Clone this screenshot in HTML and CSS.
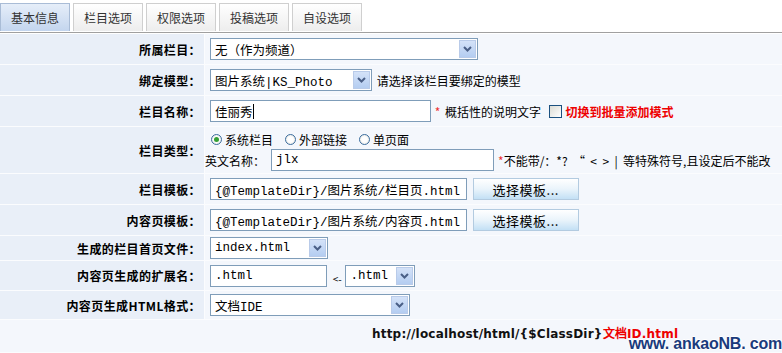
FILE: index.html
```html
<!DOCTYPE html>
<html lang="zh-CN">
<head>
  <meta charset="UTF-8">
  <title>栏目设置</title>
  <link rel="stylesheet" href="styles.css">
</head>
<body>
  <div class="tabs">
    <span class="tab active">基本信息</span>
    <span class="tab">栏目选项</span>
    <span class="tab">权限选项</span>
    <span class="tab">投稿选项</span>
    <span class="tab">自设选项</span>
  </div>

  <table class="form">
    <tr class="row">
      <td class="label">所属栏目：</td>
      <td class="field">
        <div class="select w268"><span class="select-text">无（作为频道）</span><span class="select-btn"><svg width="9" height="6" viewBox="0 0 9 6"><path d="M1 1l3.5 3.5L8 1" stroke="#4a5f86" stroke-width="2" fill="none"/></svg></span></div>
      </td>
    </tr>
    <tr class="row">
      <td class="label">绑定模型：</td>
      <td class="field">
        <div class="select w162"><span class="select-text">图片系统|KS_Photo</span><span class="select-btn"><svg width="9" height="6" viewBox="0 0 9 6"><path d="M1 1l3.5 3.5L8 1" stroke="#4a5f86" stroke-width="2" fill="none"/></svg></span></div>
        <span class="note">请选择该栏目要绑定的模型</span>
      </td>
    </tr>
    <tr class="row">
      <td class="label">栏目名称：</td>
      <td class="field">
        <div class="input w221">佳丽秀<span class="caret"></span></div>
        <span class="req">*</span> <span class="note">概括性的说明文字</span>
        <span class="checkbox"></span>
        <span class="warn">切换到批量添加模式</span>
      </td>
    </tr>
    <tr class="row tall">
      <td class="label">栏目类型：</td>
      <td class="field stack">
        <div class="radios">
          <span class="radio on"></span>系统栏目
          <span class="radio"></span>外部链接
          <span class="radio"></span>单页面
        </div>
        <div class="ename">
          英文名称：
          <div class="input w223">jlx</div>
          <span class="rule"><span class="req">*</span>不能带/：*?&nbsp;&nbsp;“&nbsp;&nbsp;&lt;&nbsp;&nbsp;&gt;&nbsp;&nbsp;|&nbsp;&nbsp;等特殊符号,且设定后不能改</span>
        </div>
      </td>
    </tr>
    <tr class="row">
      <td class="label">栏目模板：</td>
      <td class="field">
        <div class="input w257">{@TemplateDir}/图片系统/栏目页.html</div>
        <span class="btn">选择模板...</span>
      </td>
    </tr>
    <tr class="row">
      <td class="label">内容页模板：</td>
      <td class="field">
        <div class="input w257">{@TemplateDir}/图片系统/内容页.html</div>
        <span class="btn">选择模板...</span>
      </td>
    </tr>
    <tr class="row short">
      <td class="label">生成的栏目首页文件：</td>
      <td class="field">
        <div class="select w118"><span class="select-text">index.html</span><span class="select-btn"><svg width="9" height="6" viewBox="0 0 9 6"><path d="M1 1l3.5 3.5L8 1" stroke="#4a5f86" stroke-width="2" fill="none"/></svg></span></div>
      </td>
    </tr>
    <tr class="row mid">
      <td class="label">内容页生成的扩展名：</td>
      <td class="field">
        <div class="input w117">.html</div>
        <span class="arrow">&lt;-</span>
        <div class="select w70"><span class="select-text">.html</span><span class="select-btn"><svg width="9" height="6" viewBox="0 0 9 6"><path d="M1 1l3.5 3.5L8 1" stroke="#4a5f86" stroke-width="2" fill="none"/></svg></span></div>
      </td>
    </tr>
    <tr class="row mid2">
      <td class="label">内容页生成HTML格式：</td>
      <td class="field">
        <div class="select w200"><span class="select-text">文档IDE</span><span class="select-btn"><svg width="9" height="6" viewBox="0 0 9 6"><path d="M1 1l3.5 3.5L8 1" stroke="#4a5f86" stroke-width="2" fill="none"/></svg></span></div>
      </td>
    </tr>
    <tr class="row last">
      <td class="url" colspan="2">http://localhost/html/{$ClassDir}<span class="red">文档ID.html</span></td>
    </tr>
  </table>

  <div class="watermark">www. ankaoNB. com</div>
</body>
</html>
```

FILE: styles.css
```css
body {
  margin: 0;
  font-family: "Noto Sans CJK SC", sans-serif;
  font-size: 12px;
  color: #000;
  background: #fff;
  position: relative;
  height: 353px;
  overflow: hidden;
}

.tabs {
  display: flex;
  gap: 3px;
  height: 29px;
  padding-top: 3px;
  border-bottom: 1px solid #a0a0a0;
}

.tab {
  width: 70px;
  height: 28px;
  box-sizing: border-box;
  border: 1px solid #cfcfcf;
  border-bottom: none;
  background: linear-gradient(#ffffff, #ededed);
  display: flex;
  align-items: center;
  justify-content: center;
  color: #333;
}

.tab.active {
  background: linear-gradient(#e6eef9, #c3d5ee);
  border-color: #a9bcd6;
}

.form {
  width: 100%;
  margin-top: 1px;
  border-collapse: separate;
  border-spacing: 0;
  table-layout: fixed;
}

.form td {
  padding: 0;
  border-bottom: 1px solid #fbfcfe;
}

.row { height: 31px; }
.row.tall { height: 45px; }
.row.short { height: 25px; }
.row.mid { height: 30px; }
.row.mid2 { height: 29px; }
.row.last { height: 33px; }

.label {
  width: 201px;
  border-right: 1px solid #fbfcfe;
  background: #e9eff8;
  text-align: right;
  padding-right: 3px !important;
  font-weight: bold;
  letter-spacing: 0.4px;
  white-space: nowrap;
}

.field {
  background: #f4f7fc;
  padding-left: 5px !important;
  white-space: nowrap;
}

.field > * {
  vertical-align: middle;
}

.select, .input {
  display: inline-flex;
  align-items: center;
  height: 22px;
  box-sizing: border-box;
  border: 1px solid #7f9db9;
  background: #fff;
  font-family: "Liberation Mono", "Noto Sans CJK SC", monospace;
  font-size: 12.5px;
  vertical-align: middle;
}

.input {
  padding-left: 4px;
}

.select-text {
  flex: 1;
  padding-left: 4px;
  overflow: hidden;
}

.select-btn {
  width: 17px;
  height: 18px;
  margin-right: 1px;
  box-sizing: border-box;
  border: 1px solid #b9cbe9;
  background: linear-gradient(#d4e2f8, #b4cdf1);
  display: flex;
  align-items: center;
  justify-content: center;
}

.w268 { width: 268px; }
.w162 { width: 162px; }
.w221 { width: 221px; }
.w223 { width: 223px; }
.w257 { width: 257px; }
.w118 { width: 118px; }
.w117 { width: 117px; }
.w70 { width: 70px; }
.w200 { width: 200px; }

.caret {
  display: inline-block;
  width: 1px;
  height: 15px;
  background: #000;
}

.note {
  margin-left: 2px;
}

.req {
  color: #e33;
  margin-left: 1px;
}

.checkbox {
  display: inline-block;
  width: 13px;
  height: 13px;
  box-sizing: border-box;
  border: 1px solid #1c5180;
  background: linear-gradient(135deg, #dcdcd5, #fff);
  margin-left: 5px;
}

.warn {
  color: #e00;
  font-weight: bold;
  margin-left: 1px;
}

.stack {
  padding-left: 0 !important;
}

.radios {
  display: flex;
  align-items: center;
  height: 20px;
  padding-left: 6px;
  padding-top: 2px;
}

.radio {
  width: 11px;
  height: 11px;
  box-sizing: border-box;
  border-radius: 50%;
  border: 1px solid #3b6d9e;
  background: radial-gradient(#fff 40%, #dcdcd5);
  margin: 0 3px 0 0;
  position: relative;
}

.radios .radio:not(:first-child) {
  margin-left: 12px;
}

.radio.on::after {
  content: "";
  position: absolute;
  left: 2px;
  top: 2px;
  width: 5px;
  height: 5px;
  border-radius: 50%;
  background: #34a034;
}

.ename {
  display: flex;
  align-items: center;
  height: 22px;
  padding-bottom: 2px;
}

.ename .input {
  margin: 0 3px 0 6px;
}

.rule {
  white-space: nowrap;
}

.btn {
  display: inline-flex;
  align-items: center;
  justify-content: center;
  width: 106px;
  height: 22px;
  box-sizing: border-box;
  margin-left: 3px;
  border: 1px solid #b3cbe0;
  background: linear-gradient(#ffffff, #eaf4fb 50%, #c3e0f5);
  font-size: 13px;
  letter-spacing: 0.5px;
}

.arrow {
  font-size: 10px;
  margin: 0 1px 0 3px;
  position: relative;
  top: 3px;
}

.url {
  background: #f4f7fc;
  padding-left: 372px !important;
  padding-top: 4px !important;
  vertical-align: top;
  font-family: "DejaVu Sans", sans-serif;
  font-size: 12px;
  font-weight: bold;
  letter-spacing: 0.2px;
  color: #111;
}

.url .red {
  color: #e00;
}

.watermark {
  position: absolute;
  right: 0;
  bottom: 0;
  font-family: "Liberation Sans", sans-serif;
  font-size: 16px;
  font-weight: bold;
  color: #1a3b7c;
  letter-spacing: -0.2px;
  text-shadow: 1px 0 #fff, -1px 0 #fff, 0 1px #fff, 0 -1px #fff;
}
```
